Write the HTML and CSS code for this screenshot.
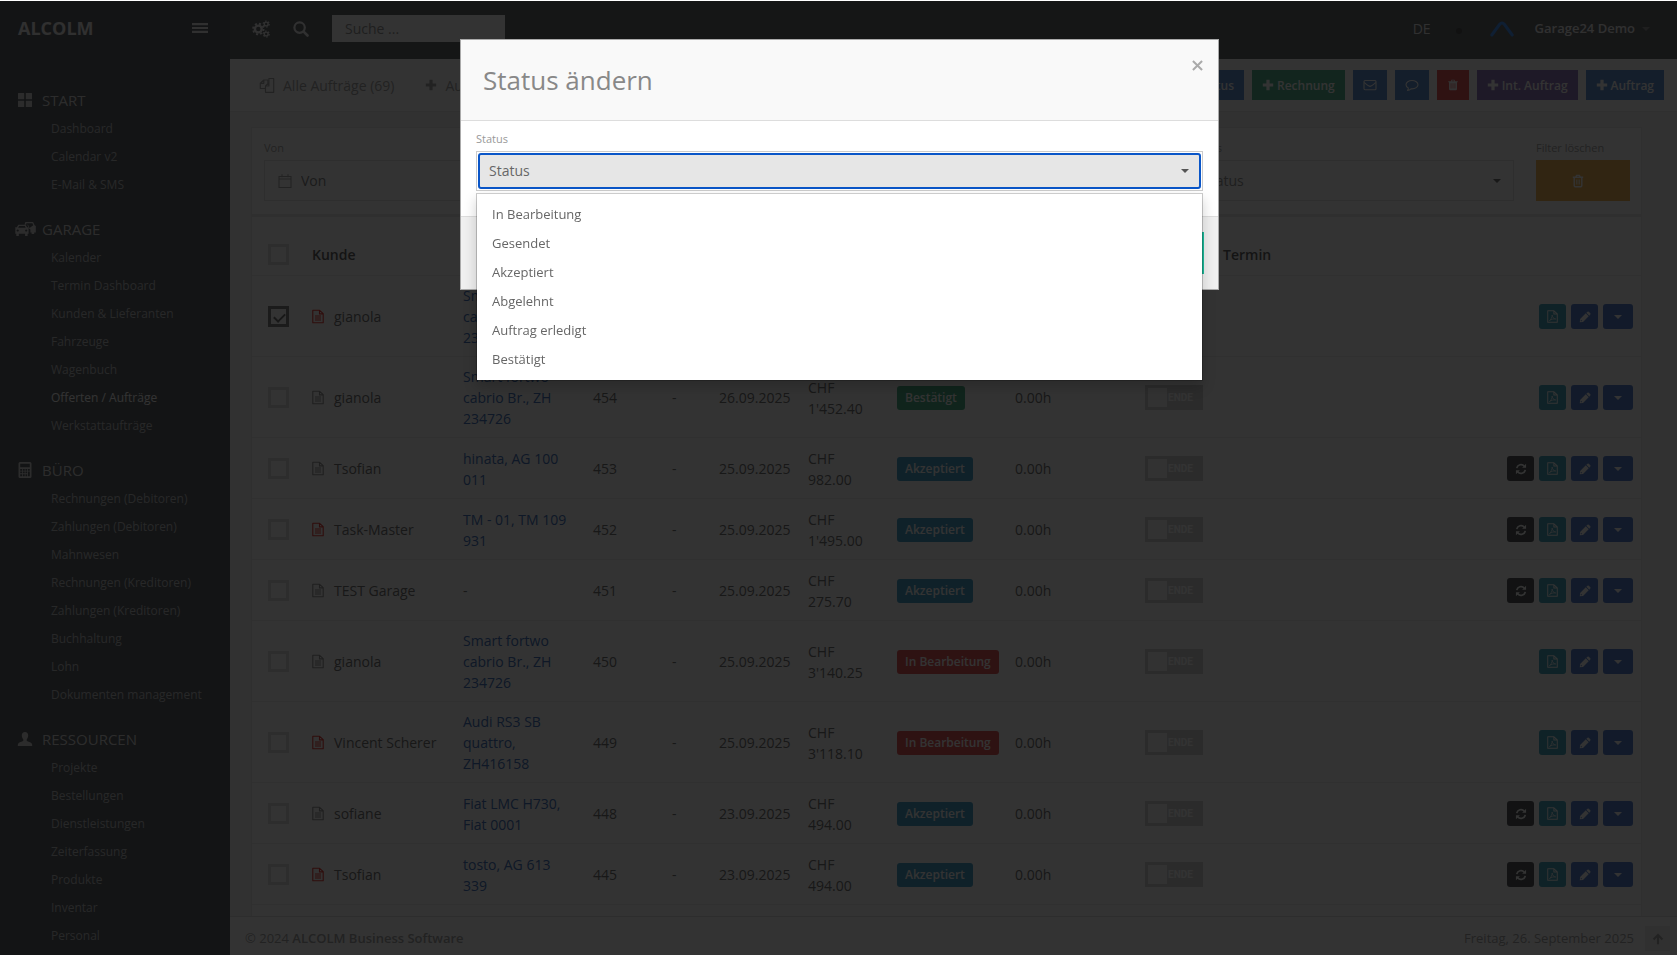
FILE: index.html
```html
<!DOCTYPE html>
<html lang="de">
<head>
<meta charset="utf-8">
<title>ALCOLM – Offerten / Aufträge</title>
<meta name="viewport" content="width=device-width, initial-scale=1">
<link rel="stylesheet" href="styles.css">
</head>
<body>
<svg class="sprite" aria-hidden="true">
  <symbol id="i-bars" viewBox="0 0 16 16"><path fill="currentColor" d="M0 3h16v2.200H0zM0 6.900h16v2.200H0zM0 10.800h16v2.200H0z"/></symbol>
  <symbol id="i-gears" viewBox="0 0 18 18"><g fill="none" stroke="currentColor"><circle cx="6.300" cy="9" r="3.400" stroke-width="2.400"/><circle cx="6.300" cy="9" r="5.300" stroke-width="1.800" stroke-dasharray="2.080 2.080"/><circle cx="14.200" cy="4" r="1.900" stroke-width="1.400"/><circle cx="14.200" cy="4" r="3" stroke-width="1.200" stroke-dasharray="1.570 1.570"/><circle cx="14.200" cy="14" r="1.900" stroke-width="1.400"/><circle cx="14.200" cy="14" r="3" stroke-width="1.200" stroke-dasharray="1.570 1.570"/></g></symbol>
  <symbol id="i-search" viewBox="0 0 16 16"><g fill="none" stroke="currentColor" stroke-linecap="round"><circle cx="6.600" cy="6.600" r="5.200" stroke-width="2.200"/><path d="M10.600 10.600l3.900 3.900" stroke-width="2.600"/></g></symbol>
  <symbol id="i-grid" viewBox="0 0 16 16"><path fill="currentColor" d="M1.500 1h5.200q.5 0 .5.500v5.700H1V1.500q0-.5.500-.5zM8.800 1h5.700q.5 0 .5.500v5.700H8.800zM1 8.800h6.200V15H1.500q-.5 0-.5-.500zM8.800 8.800H15v5.700q0 .5-.5.500H8.800z"/></symbol>
  <symbol id="i-cars" viewBox="0 0 22 16"><path fill="currentColor" fill-rule="evenodd" d="M10.500 3.500L11.400 1h7.700l1.500 3.200 1.200.8v6.500h-1.600V13h-2.600v-1.500h-1.200V8.400l-1.400-.8-1.400-3.400-1-.7zM12.400 2.300l-.3 1.100 2 .3 1.400 3.200 3.800-2.700-.9-1.900zM2.800 6.300L4.300 3.700h7.300l1.500 2.600 1.700.2v1h-.8l.6.800v4.500h-1V15h-2.500v-2.200H4.800V15H2.300v-2.200h-1V8.300l.6-.8H1v-1zM4.200 6.800h7.500l-.9-1.900H5.100zM3.700 8.400a1.100 1.100 0 1 0 .01 0zM12.200 8.400a1.100 1.100 0 1 0 .01 0z"/></symbol>
  <symbol id="i-calc" viewBox="0 0 16 16"><path fill="currentColor" fill-rule="evenodd" d="M3 0h10a1.500 1.500 0 0 1 1.500 1.500v13A1.500 1.500 0 0 1 13 16H3a1.500 1.500 0 0 1-1.500-1.500v-13A1.500 1.500 0 0 1 3 0zM3.200 1.800v3.400h9.600V1.800zM3.200 7v1.700h2V7zM6 7v1.700h1.700V7zM8.500 7v1.700h1.700V7zM11 7v1.700h1.800V7zM3.200 9.600v1.700h2V9.600zM6 9.600v1.700h1.700V9.600zM8.500 9.600v1.700h1.700V9.600zM11 9.600v4.600h1.800V9.600zM3.200 12.300v1.900h2v-1.900zM6 12.300v1.900h1.700v-1.900zM8.500 12.300v1.900h1.700v-1.900z"/></symbol>
  <symbol id="i-user" viewBox="0 0 16 16"><path fill="currentColor" d="M8 1c2 0 3.200 1.400 3.200 3.300 0 1.700-.6 3.200-1.500 4.100v1.400c1 .9 4.700 1.700 5.200 3 .3.700.3 1.500.3 2.200H.8c0-.7 0-1.500.3-2.200.5-1.300 4.200-2.100 5.200-3V8.400c-.9-.9-1.500-2.400-1.500-4.100C4.800 2.400 6 1 8 1z"/></symbol>
  <symbol id="i-copy" viewBox="0 0 16 16"><g fill="none" stroke="currentColor" stroke-width="1.200" stroke-linejoin="round"><path d="M6.500 11.500H1.300V6.300L4.800 3h4.100v3.200M4.800 3v3.300H1.300"/><path d="M6.500 9l3.400-3.300V1.500h4.800v13.800H6.500zM6.500 9h3.400V5.700"/></g></symbol>
  <symbol id="i-plus" viewBox="0 0 12 12"><path fill="currentColor" d="M4.400.8h3.200v3.600h3.600v3.200H7.600v3.600H4.400V7.600H.8V4.400h3.600z"/></symbol>
  <symbol id="i-mail" viewBox="0 0 14 14"><g fill="none" stroke="currentColor" stroke-width="1.100" stroke-linejoin="round"><rect x="1" y="2.500" width="12" height="9.200" rx="1"/><path d="M1.200 4.500c2 1.700 3.600 3.400 5.800 3.900 2.200-.5 3.800-2.200 5.800-3.900"/></g></symbol>
  <symbol id="i-comment" viewBox="0 0 14 14"><path fill="none" stroke="currentColor" stroke-width="1.100" stroke-linejoin="round" d="M7 2.500c3.300 0 6 1.900 6 4.200s-2.700 4.200-6 4.200l-1-.1c-1 1-2.200 1.500-3.500 1.600.6-.7.9-1.500.8-2.400C1.800 9.200 1 8 1 6.700c0-2.300 2.700-4.200 6-4.200z"/></symbol>
  <symbol id="i-trash" viewBox="0 0 14 14"><path fill="currentColor" fill-rule="evenodd" d="M5.200.8h3.600l.7 1.700h3v1.200h-.9v8.100q0 1.400-1.200 1.400H3.600q-1.200 0-1.200-1.400V3.700h-.9V2.500h3zM5.800 1.800l-.3.700h3l-.3-.7zM4.300 5v6h.8V5zM6.600 5v6h.8V5zM8.900 5v6h.8V5z"/></symbol>
  <symbol id="i-trash-o" viewBox="0 0 14 14"><g fill="none" stroke="currentColor" stroke-width="1.400"><path d="M1.800 3.200h10.400M4.800 3l.8-1.600h2.800L9.200 3M3.200 3.500v8.100q0 1.200 1 1.200h5.600q1 0 1-1.200V3.500"/><path d="M5.500 5.500v5M7 5.500v5M8.500 5.500v5" stroke-width=".7"/></g></symbol>
  <symbol id="i-calendar" viewBox="0 0 14 16"><path fill="none" stroke="currentColor" stroke-width="1.100" d="M1 3.500h12v11H1zM1 6h12M4 1.200v3M10 1.200v3"/></symbol>
  <symbol id="i-doc" viewBox="0 0 12 14"><path fill="none" stroke="currentColor" stroke-width="1.100" stroke-linejoin="round" d="M.8.8h6.800l3.600 3.400v9H.8zM7.500.9v3.500h3.600M3 6.500h6M3 8.500h6M3 10.500h6"/></symbol>
  <symbol id="i-pdf" viewBox="0 0 12 14"><g fill="none" stroke="currentColor" stroke-linejoin="round"><path stroke-width="1.100" d="M.8.8h6.800l3.600 3.400v9H.8zM7.500.9v3.500h3.600"/><path stroke-width=".8" d="M2.700 11.400c1.600-.9 3-3.700 2.900-6 .3 2.500 1.800 4.200 3.900 4.300-2.200-.4-4.500.2-6.800 1.700z"/></g></symbol>
  <symbol id="i-pencil" viewBox="0 0 14 14"><path fill="currentColor" fill-rule="evenodd" d="M8.600 2L9.900.8q.8-.6 1.500 0L13.200 2.600q.6.700 0 1.500L12 5.400zM7.900 2.700l3.400 3.400-6.600 6.600L.9 13.100l.4-3.800zM2.200 10.200L2 11.400l.6.600 1.200-.2z"/></symbol>
  <symbol id="i-refresh" viewBox="0 0 14 14"><g fill="none" stroke="currentColor" stroke-width="1.900"><path d="M2 6A5.100 5.100 0 0 1 10.800 3.600"/><path d="M12 8a5.100 5.100 0 0 1-8.800 2.400"/></g><path fill="currentColor" d="M12.900 1v4.600H8.300zM1.100 13V8.400h4.600z"/></symbol>
  <symbol id="i-caret" viewBox="0 0 8 4"><path fill="currentColor" d="M0 0h8L4 4z"/></symbol>
  <symbol id="i-up" viewBox="0 0 14 14"><path fill="none" stroke="currentColor" stroke-width="2.400" d="M7 13V2.500M1.800 7.500L7 2.300l5.200 5.200"/></symbol>
  <symbol id="i-logo" viewBox="0 0 24 16"><path fill="none" stroke="currentColor" stroke-width="3" stroke-linecap="round" d="M1.800 14L9.500 3.500q2.500-3 5 0L22.200 14"/></symbol>
  <symbol id="i-close" viewBox="0 0 12 12"><path stroke="currentColor" stroke-width="2.200" d="M1 1l10 10M11 1L1 11"/></symbol>
</svg>

<div class="app">
  <aside class="sidebar">
    <div class="brand">
      <span class="brand-name">ALCOLM</span>
      <button class="icon-btn" type="button" aria-label="Menü"><svg class="ic16"><use href="#i-bars"/></svg></button>
    </div>
    <nav class="menu">
      <section class="menu-group">
        <h2 class="menu-title"><svg class="menu-icon"><use href="#i-grid"/></svg>START</h2>
        <ul>
          <li><a href="#">Dashboard</a></li>
          <li><a href="#">Calendar v2</a></li>
          <li><a href="#">E-Mail &amp; SMS</a></li>
        </ul>
      </section>
      <section class="menu-group">
        <h2 class="menu-title"><svg class="menu-icon"><use href="#i-cars"/></svg>GARAGE</h2>
        <ul>
          <li><a href="#">Kalender</a></li>
          <li><a href="#">Termin Dashboard</a></li>
          <li><a href="#">Kunden &amp; Lieferanten</a></li>
          <li><a href="#">Fahrzeuge</a></li>
          <li><a href="#">Wagenbuch</a></li>
          <li><a href="#" class="active" aria-current="page">Offerten / Aufträge</a></li>
          <li><a href="#">Werkstattaufträge</a></li>
        </ul>
      </section>
      <section class="menu-group">
        <h2 class="menu-title"><svg class="menu-icon"><use href="#i-calc"/></svg>BÜRO</h2>
        <ul>
          <li><a href="#">Rechnungen (Debitoren)</a></li>
          <li><a href="#">Zahlungen (Debitoren)</a></li>
          <li><a href="#">Mahnwesen</a></li>
          <li><a href="#">Rechnungen (Kreditoren)</a></li>
          <li><a href="#">Zahlungen (Kreditoren)</a></li>
          <li><a href="#">Buchhaltung</a></li>
          <li><a href="#">Lohn</a></li>
          <li><a href="#">Dokumenten management</a></li>
        </ul>
      </section>
      <section class="menu-group">
        <h2 class="menu-title"><svg class="menu-icon"><use href="#i-user"/></svg>RESSOURCEN</h2>
        <ul>
          <li><a href="#">Projekte</a></li>
          <li><a href="#">Bestellungen</a></li>
          <li><a href="#">Dienstleistungen</a></li>
          <li><a href="#">Zeiterfassung</a></li>
          <li><a href="#">Produkte</a></li>
          <li><a href="#">Inventar</a></li>
          <li><a href="#">Personal</a></li>
        </ul>
      </section>
    </nav>
  </aside>

  <div class="main">
    <header class="topbar">
      <button class="icon-btn" type="button" aria-label="Einstellungen"><svg class="ic18"><use href="#i-gears"/></svg></button>
      <button class="icon-btn" type="button" aria-label="Suchen"><svg class="ic16"><use href="#i-search"/></svg></button>
      <input class="search" type="search" placeholder="Suche ..." aria-label="Suche">
      <div class="account">
        <a class="lang" href="#">DE</a>
        <span class="dot"></span>
        <svg class="logo"><use href="#i-logo"/></svg>
        <button class="user" type="button">Garage24 Demo<svg class="caret"><use href="#i-caret"/></svg></button>
      </div>
    </header>

    <div class="toolbar">
      <nav class="tabs">
        <a href="#"><svg class="ic16"><use href="#i-copy"/></svg>Alle Aufträge (69)</a>
        <a href="#"><svg class="ic12"><use href="#i-plus"/></svg>Auftrag</a>
      </nav>
      <div class="actions">
        <button class="btn blue" type="button">Status</button>
        <button class="btn green" type="button"><svg class="ic12"><use href="#i-plus"/></svg>Rechnung</button>
        <button class="btn blue" type="button" aria-label="E-Mail"><svg class="ic14"><use href="#i-mail"/></svg></button>
        <button class="btn blue" type="button" aria-label="SMS"><svg class="ic14"><use href="#i-comment"/></svg></button>
        <button class="btn red" type="button" aria-label="Löschen"><svg class="ic12"><use href="#i-trash"/></svg></button>
        <button class="btn purple" type="button"><svg class="ic12"><use href="#i-plus"/></svg>Int. Auftrag</button>
        <button class="btn blue" type="button"><svg class="ic12"><use href="#i-plus"/></svg>Auftrag</button>
      </div>
    </div>

    <main class="content">
      <div class="panel">
        <form class="filters">
          <div class="field">
            <label for="f-von">Von</label>
            <div class="date-box"><svg class="cal"><use href="#i-calendar"/></svg><input id="f-von" type="text" placeholder="Von"></div>
          </div>
          <div class="field">
            <label for="f-status">Status</label>
            <div class="select-box"><select id="f-status"><option>Status</option></select><svg class="caret"><use href="#i-caret"/></svg></div>
          </div>
          <div class="field">
            <label for="f-clear">Filter löschen</label>
            <button id="f-clear" class="btn-clear" type="reset"><svg class="ic14"><use href="#i-trash-o"/></svg></button>
          </div>
        </form>

        <table class="orders">
          <colgroup><col class="c-check"><col class="c-name"><col class="c-car"><col class="c-num"><col class="c-dash"><col class="c-date"><col class="c-sum"><col class="c-status"><col class="c-hours"><col class="c-end"><col></colgroup>
          <thead>
            <tr><th><input type="checkbox" aria-label="Alle auswählen"></th><th scope="col">Kunde</th><th></th><th></th><th></th><th></th><th></th><th></th><th></th><th></th><th scope="col">Termin</th></tr>
          </thead>
          <tbody>
            <tr>
              <td><input type="checkbox" checked aria-label="gianola"></td>
              <td><span class="name"><svg class="doc open"><use href="#i-doc"/></svg>gianola</span></td>
              <td class="car"><a href="#">Smart fortwo cabrio Br., ZH 234726</a></td>
              <td></td><td></td><td></td><td></td><td></td><td></td><td></td>
              <td><div class="row-actions"><button class="act teal" type="button" aria-label="PDF"><svg class="pdf"><use href="#i-pdf"/></svg></button><button class="act navy" type="button" aria-label="Bearbeiten"><svg class="ic12"><use href="#i-pencil"/></svg></button><button class="act navy wide" type="button" aria-label="Mehr"><svg class="caret"><use href="#i-caret"/></svg></button></div></td>
            </tr>
            <tr>
              <td><input type="checkbox" aria-label="454"></td>
              <td><span class="name"><svg class="doc"><use href="#i-doc"/></svg>gianola</span></td>
              <td class="car"><a href="#">Smart fortwo cabrio Br., ZH 234726</a></td>
              <td>454</td><td>-</td><td>26.09.2025</td><td class="sum">CHF 1'452.40</td><td><span class="badge b-green">Bestätigt</span></td><td>0.00h</td>
              <td><label class="toggle"><input type="checkbox"><span class="knob"></span>ENDE</label></td>
              <td><div class="row-actions"><button class="act teal" type="button" aria-label="PDF"><svg class="pdf"><use href="#i-pdf"/></svg></button><button class="act navy" type="button" aria-label="Bearbeiten"><svg class="ic12"><use href="#i-pencil"/></svg></button><button class="act navy wide" type="button" aria-label="Mehr"><svg class="caret"><use href="#i-caret"/></svg></button></div></td>
            </tr>
            <tr>
              <td><input type="checkbox" aria-label="453"></td>
              <td><span class="name"><svg class="doc"><use href="#i-doc"/></svg>Tsofian</span></td>
              <td class="car"><a href="#">hinata, AG 100 011</a></td>
              <td>453</td><td>-</td><td>25.09.2025</td><td class="sum">CHF 982.00</td><td><span class="badge b-cyan">Akzeptiert</span></td><td>0.00h</td>
              <td><label class="toggle"><input type="checkbox"><span class="knob"></span>ENDE</label></td>
              <td><div class="row-actions"><button class="act dark" type="button" aria-label="Umwandeln"><svg class="ic12"><use href="#i-refresh"/></svg></button><button class="act teal" type="button" aria-label="PDF"><svg class="pdf"><use href="#i-pdf"/></svg></button><button class="act navy" type="button" aria-label="Bearbeiten"><svg class="ic12"><use href="#i-pencil"/></svg></button><button class="act navy wide" type="button" aria-label="Mehr"><svg class="caret"><use href="#i-caret"/></svg></button></div></td>
            </tr>
            <tr>
              <td><input type="checkbox" aria-label="452"></td>
              <td><span class="name"><svg class="doc open"><use href="#i-doc"/></svg>Task-Master</span></td>
              <td class="car"><a href="#">TM - 01, TM 109 931</a></td>
              <td>452</td><td>-</td><td>25.09.2025</td><td class="sum">CHF 1'495.00</td><td><span class="badge b-cyan">Akzeptiert</span></td><td>0.00h</td>
              <td><label class="toggle"><input type="checkbox"><span class="knob"></span>ENDE</label></td>
              <td><div class="row-actions"><button class="act dark" type="button" aria-label="Umwandeln"><svg class="ic12"><use href="#i-refresh"/></svg></button><button class="act teal" type="button" aria-label="PDF"><svg class="pdf"><use href="#i-pdf"/></svg></button><button class="act navy" type="button" aria-label="Bearbeiten"><svg class="ic12"><use href="#i-pencil"/></svg></button><button class="act navy wide" type="button" aria-label="Mehr"><svg class="caret"><use href="#i-caret"/></svg></button></div></td>
            </tr>
            <tr>
              <td><input type="checkbox" aria-label="451"></td>
              <td><span class="name"><svg class="doc"><use href="#i-doc"/></svg>TEST Garage</span></td>
              <td class="car">-</td>
              <td>451</td><td>-</td><td>25.09.2025</td><td class="sum">CHF 275.70</td><td><span class="badge b-cyan">Akzeptiert</span></td><td>0.00h</td>
              <td><label class="toggle"><input type="checkbox"><span class="knob"></span>ENDE</label></td>
              <td><div class="row-actions"><button class="act dark" type="button" aria-label="Umwandeln"><svg class="ic12"><use href="#i-refresh"/></svg></button><button class="act teal" type="button" aria-label="PDF"><svg class="pdf"><use href="#i-pdf"/></svg></button><button class="act navy" type="button" aria-label="Bearbeiten"><svg class="ic12"><use href="#i-pencil"/></svg></button><button class="act navy wide" type="button" aria-label="Mehr"><svg class="caret"><use href="#i-caret"/></svg></button></div></td>
            </tr>
            <tr>
              <td><input type="checkbox" aria-label="450"></td>
              <td><span class="name"><svg class="doc"><use href="#i-doc"/></svg>gianola</span></td>
              <td class="car"><a href="#">Smart fortwo cabrio Br., ZH 234726</a></td>
              <td>450</td><td>-</td><td>25.09.2025</td><td class="sum">CHF 3'140.25</td><td><span class="badge b-red">In Bearbeitung</span></td><td>0.00h</td>
              <td><label class="toggle"><input type="checkbox"><span class="knob"></span>ENDE</label></td>
              <td><div class="row-actions"><button class="act teal" type="button" aria-label="PDF"><svg class="pdf"><use href="#i-pdf"/></svg></button><button class="act navy" type="button" aria-label="Bearbeiten"><svg class="ic12"><use href="#i-pencil"/></svg></button><button class="act navy wide" type="button" aria-label="Mehr"><svg class="caret"><use href="#i-caret"/></svg></button></div></td>
            </tr>
            <tr>
              <td><input type="checkbox" aria-label="449"></td>
              <td><span class="name"><svg class="doc open"><use href="#i-doc"/></svg>Vincent Scherer</span></td>
              <td class="car"><a href="#">Audi RS3 SB quattro, ZH416158</a></td>
              <td>449</td><td>-</td><td>25.09.2025</td><td class="sum">CHF 3'118.10</td><td><span class="badge b-red">In Bearbeitung</span></td><td>0.00h</td>
              <td><label class="toggle"><input type="checkbox"><span class="knob"></span>ENDE</label></td>
              <td><div class="row-actions"><button class="act teal" type="button" aria-label="PDF"><svg class="pdf"><use href="#i-pdf"/></svg></button><button class="act navy" type="button" aria-label="Bearbeiten"><svg class="ic12"><use href="#i-pencil"/></svg></button><button class="act navy wide" type="button" aria-label="Mehr"><svg class="caret"><use href="#i-caret"/></svg></button></div></td>
            </tr>
            <tr>
              <td><input type="checkbox" aria-label="448"></td>
              <td><span class="name"><svg class="doc"><use href="#i-doc"/></svg>sofiane</span></td>
              <td class="car"><a href="#">Fiat LMC H730, Fiat 0001</a></td>
              <td>448</td><td>-</td><td>23.09.2025</td><td class="sum">CHF 494.00</td><td><span class="badge b-cyan">Akzeptiert</span></td><td>0.00h</td>
              <td><label class="toggle"><input type="checkbox"><span class="knob"></span>ENDE</label></td>
              <td><div class="row-actions"><button class="act dark" type="button" aria-label="Umwandeln"><svg class="ic12"><use href="#i-refresh"/></svg></button><button class="act teal" type="button" aria-label="PDF"><svg class="pdf"><use href="#i-pdf"/></svg></button><button class="act navy" type="button" aria-label="Bearbeiten"><svg class="ic12"><use href="#i-pencil"/></svg></button><button class="act navy wide" type="button" aria-label="Mehr"><svg class="caret"><use href="#i-caret"/></svg></button></div></td>
            </tr>
            <tr>
              <td><input type="checkbox" aria-label="445"></td>
              <td><span class="name"><svg class="doc open"><use href="#i-doc"/></svg>Tsofian</span></td>
              <td class="car"><a href="#">tosto, AG 613 339</a></td>
              <td>445</td><td>-</td><td>23.09.2025</td><td class="sum">CHF 494.00</td><td><span class="badge b-cyan">Akzeptiert</span></td><td>0.00h</td>
              <td><label class="toggle"><input type="checkbox"><span class="knob"></span>ENDE</label></td>
              <td><div class="row-actions"><button class="act dark" type="button" aria-label="Umwandeln"><svg class="ic12"><use href="#i-refresh"/></svg></button><button class="act teal" type="button" aria-label="PDF"><svg class="pdf"><use href="#i-pdf"/></svg></button><button class="act navy" type="button" aria-label="Bearbeiten"><svg class="ic12"><use href="#i-pencil"/></svg></button><button class="act navy wide" type="button" aria-label="Mehr"><svg class="caret"><use href="#i-caret"/></svg></button></div></td>
            </tr>
          </tbody>
        </table>
      </div>
    </main>

    <footer class="footer">
      <span>© 2024 <strong>ALCOLM Business Software</strong></span>
      <span class="today">Freitag, 26. September 2025</span>
      <button class="to-top" type="button" aria-label="Nach oben"><svg class="ic12"><use href="#i-up"/></svg></button>
    </footer>
  </div>
</div>

<div class="overlay">
  <div class="modal" role="dialog" aria-modal="true" aria-labelledby="modal-title">
    <div class="modal-head">
      <h1 id="modal-title">Status ändern</h1>
      <button class="close" type="button" aria-label="Schliessen"><svg class="ic11"><use href="#i-close"/></svg></button>
    </div>
    <div class="modal-body">
      <label for="new-status">Status</label>
      <div class="picker">
        <div class="picker-frame">
          <select id="new-status"><option>Status</option></select>
          <svg class="caret"><use href="#i-caret"/></svg>
        </div>
        <ul class="dropdown" role="listbox" aria-label="Status">
          <li role="option">In Bearbeitung</li>
          <li role="option">Gesendet</li>
          <li role="option">Akzeptiert</li>
          <li role="option">Abgelehnt</li>
          <li role="option">Auftrag erledigt</li>
          <li role="option">Bestätigt</li>
        </ul>
      </div>
    </div>
    <div class="modal-foot">
      <button class="save" type="submit" aria-label="Speichern"></button>
    </div>
  </div>
</div>
</body>
</html>
```

FILE: styles.css
```css
* { box-sizing: border-box; }

body {
  margin: 0;
  padding-top: 1px;
  height: 100vh;
  overflow: hidden;
  background: #fff;
  color: #777;
  font: 14px/21px "Open Sans", "Noto Sans", sans-serif;
}

button, input, select { font: inherit; color: inherit; }
button { border: 0; padding: 0; background: none; cursor: pointer; }
a { color: inherit; text-decoration: none; }
ul { list-style: none; margin: 0; padding: 0; }
svg { display: block; flex: none; }

.sprite { position: absolute; width: 0; height: 0; }
.ic11 { width: 11px; height: 11px; }
.ic12 { width: 12px; height: 12px; }
.ic14 { width: 14px; height: 14px; }
.ic16 { width: 16px; height: 16px; }
.ic18 { width: 18px; height: 18px; }
.caret { width: 8px; height: 4px; }

.app { display: flex; height: 100%; }

/* Sidebar */
.sidebar { flex: none; width: 230px; overflow: hidden; background: #5f6468; }
.brand {
  display: flex;
  align-items: center;
  justify-content: space-between;
  height: 54px;
  padding: 0 22px 0 18px;
  color: #eee;
}
.brand-name { font-size: 18px; font-weight: 700; }
.menu { padding-top: 30px; }
.menu-group { margin-bottom: 15px; }
.menu-title {
  display: flex;
  align-items: center;
  gap: 6px;
  height: 30px;
  margin: 0;
  padding-left: 14px;
  color: #dcdcdc;
  font-size: 15px;
  font-weight: 400;
}
.menu-icon { width: 22px; height: 16px; }
.menu a {
  display: block;
  padding-left: 51px;
  color: #c4c6c8;
  font-size: 12px;
  line-height: 28px;
}
.menu a.active { color: #fff; }

/* Top bar */
.main { flex: 1; min-width: 0; display: flex; flex-direction: column; }
.topbar {
  flex: none;
  display: flex;
  align-items: center;
  height: 58px;
  padding: 0 27px 3px 22px;
  gap: 23px;
  background: #696d71;
  color: #f0f0f0;
}
.topbar .search {
  width: 173px;
  height: 27px;
  padding: 0 13px;
  border: 0;
  background: #fff;
  appearance: none;
}
.search::placeholder { color: #999; opacity: 1; }
.account { display: flex; align-items: center; margin-left: auto; }
.dot { width: 6px; height: 6px; margin: 4px 28px 0 25px; border-radius: 3px; background: #555; }
.logo { width: 24px; height: 16px; margin-right: 21px; color: #4a9aff; }
.user { display: flex; align-items: center; gap: 7px; font-size: 13px; font-weight: 600; }
.user .caret { color: #999; }

/* Toolbar */
.toolbar {
  flex: none;
  display: flex;
  align-items: center;
  justify-content: space-between;
  height: 53px;
  padding: 0 13px 0 29px;
  border-bottom: 1px solid #e8e8e8;
  background: #fff;
}
.tabs { display: flex; gap: 31px; color: #aaa; }
.tabs a { display: flex; align-items: center; gap: 8px; }
.actions { display: flex; gap: 8px; }
.btn {
  display: flex;
  align-items: center;
  gap: 3px;
  height: 30px;
  padding: 0 10px;
  color: #fff;
  font-size: 12px;
  font-weight: 600;
}
.blue { background: #6494d4; }
.green { background: #5ab896; }
.red { background: #e85a5c; }
.purple { background: #957dc0; }

/* Filters */
.content { flex: 1; min-height: 0; overflow: hidden; padding: 15px 35px 0 21px; background: #f3f3f3; }
.panel { min-height: 100%; border: 1px solid #eaeaea; border-bottom: 0; background: #fff; }
.filters {
  display: grid;
  grid-template-columns: 1fr 324px 94px;
  gap: 22px;
  padding: 11px 11px 13px 12px;
  border-bottom: 3px solid #e8e8e8;
}
.field label { display: block; margin-bottom: 4px; color: #aaa; font-size: 11px; line-height: 17px; }
.date-box, .select-box {
  display: flex;
  align-items: center;
  height: 41px;
  border: 1px solid #e6e6e6;
}
.date-box { gap: 9px; padding-left: 13px; }
.cal { width: 14px; height: 16px; color: #aaa; }
.date-box input { flex: 1; min-width: 0; padding: 0; border: 0; background: none; }
.date-box input::placeholder { color: #888; opacity: 1; }
.select-box { padding-right: 12px; }
.select-box select {
  flex: 1;
  height: 100%;
  padding: 0 0 0 12px;
  border: 0;
  background: none;
  color: #999;
  appearance: none;
}
.btn-clear {
  display: flex;
  align-items: center;
  justify-content: center;
  width: 100%;
  height: 41px;
  padding-right: 10px;
  background: #f2b95c;
  color: #fff;
}

/* Orders table */
.orders { width: 100%; table-layout: fixed; border-collapse: separate; border-spacing: 0; }
.c-check { width: 52px; }
.c-name { width: 151px; }
.c-car { width: 130px; }
.c-num { width: 79px; }
.c-dash { width: 47px; }
.c-date { width: 89px; }
.c-sum { width: 89px; }
.c-status { width: 118px; }
.c-hours { width: 130px; }
.c-end { width: 78px; }
.orders tr { height: 61px; }
.orders thead tr { height: 59px; }
.orders th, .orders td {
  padding: 9px 8px 8px;
  border-bottom: 1px solid #efefef;
  vertical-align: middle;
  text-align: left;
}
.orders th { color: #666; font-weight: 600; padding-top: 23px; padding-bottom: 7px; }
.orders th:first-child, .orders td:first-child { padding-left: 16px; }
.orders td.car, .orders td.sum { padding-right: 16px; }
.orders .car a { color: #4a78c0; }
.orders td > input, .orders th > input {
  display: block;
  width: 21px;
  height: 21px;
  margin: 0;
  border: 3px solid #e2e2e2;
  appearance: none;
}
.orders td > input:checked { border-color: #888; }
.orders td > input:checked::before {
  content: "";
  display: block;
  width: 9px;
  height: 5px;
  margin: 4px 0 0 3px;
  border: solid #777;
  border-width: 0 0 2px 2px;
  transform: rotate(-45deg);
}
.name { display: flex; align-items: center; gap: 10px; white-space: nowrap; }
.doc { width: 12px; height: 15px; color: #999; }
.doc.open { color: #e8403c; }
.badge {
  display: inline-block;
  padding: 0 8px;
  border-radius: 3px;
  color: #fff;
  font-size: 12px;
  font-weight: 600;
  line-height: 24px;
}
.b-green { background: #4fb58c; }
.b-cyan { background: #4ea4cc; }
.b-red { background: #e65a5c; }
.toggle {
  display: flex;
  align-items: center;
  width: 58px;
  height: 25px;
  padding-left: 3px;
  gap: 1px;
  background: #d8d8d8;
  color: #fff;
  font: 700 10px/25px Roboto, Arial, sans-serif;
}
.toggle input { position: absolute; opacity: 0; pointer-events: none; }
.knob { width: 19px; height: 19px; background: #fafafa; }
.row-actions { display: flex; justify-content: flex-end; gap: 5px; }
.act {
  display: flex;
  align-items: center;
  justify-content: center;
  width: 27px;
  height: 25px;
  border-radius: 3px;
  color: #fff;
}
.act.wide { width: 30px; }
.dark { background: #5a5d60; }
.teal { background: #4ca8c0; }
.navy { background: #5a84d0; }
.pdf { width: 11px; height: 13px; }

/* Page footer */
.footer {
  flex: none;
  display: flex;
  align-items: center;
  height: 39px;
  padding: 5px 7px 0 15px;
  border-top: 1px solid #e0e0e0;
  background: #fff;
  color: #aaa;
  font-size: 13px;
}
.footer strong { font-weight: 600; }
.today { margin: 0 11px 0 auto; }
.to-top {
  display: flex;
  align-items: center;
  justify-content: center;
  width: 25px;
  height: 25px;
  background: #eee;
  color: #aaa;
}

/* Modal */
.overlay {
  position: fixed;
  inset: 1px 0 0;
  display: flex;
  justify-content: center;
  align-items: flex-start;
  padding: 38px 0 0 2px;
  background: rgba(0, 0, 0, .8);
}
.modal { width: 759px; border: 1px solid #aaa; background: #fff; }
.modal-head {
  display: flex;
  justify-content: space-between;
  align-items: flex-start;
  padding: 20px 15px 20px 22px;
  border-bottom: 1px solid #ddd;
  background: #f9f9f9;
}
.modal-head h1 { margin: 0; color: #888; font-size: 26px; font-weight: 400; line-height: 40px; }
.close { color: #aaa; }
.modal-body { padding: 8px 15px 25px; }
.modal-body label { display: block; margin-bottom: 2px; color: #999; font-size: 11px; line-height: 20px; }
.picker { position: relative; }
.picker-frame {
  display: flex;
  align-items: center;
  height: 40px;
  padding: 1px;
  border: 1px solid #ccc;
}
.picker-frame select {
  flex: 1;
  height: 36px;
  padding: 0 9px 2px;
  border: 2px solid #0a56c8;
  border-radius: 3px;
  background: #e6e6e6;
  color: #666;
  appearance: none;
}
.picker-frame .caret { margin-left: -20px; margin-right: 12px; color: #555; }
.dropdown {
  position: absolute;
  top: 42px;
  left: 0;
  right: 0;
  padding: 6px 0;
  border: 1px solid #ccc;
  border-color: #ccc rgba(0, 0, 0, .2) rgba(0, 0, 0, .2);
  background: #fff;
  background-clip: padding-box;
  box-shadow: 0 6px 12px rgba(0, 0, 0, .18);
  color: #666;
  font-size: 13px;
}
.dropdown li { padding: 0 15px; line-height: 29px; }
.modal-foot {
  display: flex;
  justify-content: flex-end;
  padding: 15px 14px;
  border-top: 1px solid #ddd;
  background: #f0f0f0;
}
.save { width: 90px; height: 42px; background: #1bbc9b; }
```
